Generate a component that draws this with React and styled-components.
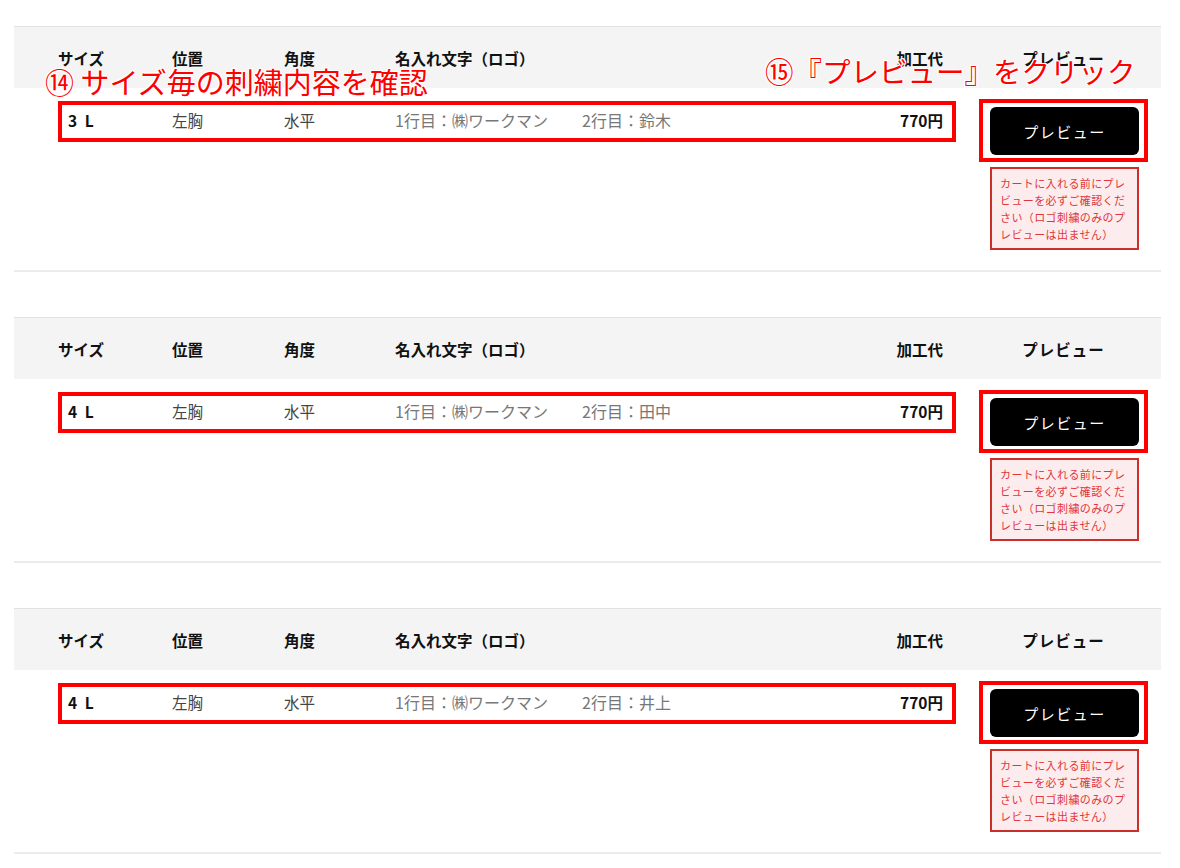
import React from 'react'
import styled, { createGlobalStyle } from 'styled-components'

const GlobalStyle = createGlobalStyle`
  * { box-sizing: border-box; }
  body {
    margin: 0;
    background: #fff;
    font-family: "Noto Sans CJK JP", "Noto Sans", sans-serif;
    color: #222;
  }
`

const Page = styled.div`
  position: relative;
  width: 1147px;
  margin-left: 14px;
  padding-top: 26px;
  display: flex;
  flex-direction: column;
  gap: 45px;
`

const Section = styled.section`
  border-top: 1px solid #e2e2e2;
  border-bottom: 2px solid #ebebeb;
`

const Head = styled.div`
  display: flex;
  align-items: center;
  height: 61px;
  padding-left: 44px;
  gap: 23px;
  background: #f4f4f4;
`

const Cols = styled.div`
  width: 898px;
  display: grid;
  grid-template-columns: 114px 112px 111px 1fr auto;
  align-items: center;
  padding-right: 13px;
`

const HeadCell = styled.div`
  font-size: 15.5px;
  font-weight: 700;
  color: #111;
  text-align: ${p => (p.right ? 'right' : 'left')};
`

const PreviewHead = styled.div`
  width: 169px;
  text-align: center;
  font-size: 15.5px;
  font-weight: 700;
  color: #111;
  letter-spacing: 1px;
`

const Body = styled.div`
  display: flex;
  align-items: flex-start;
  padding: 11px 0 20px 44px;
  gap: 23px;
`

const DataBox = styled(Cols)`
  height: 41px;
  margin-top: 2px;
  padding-bottom: 4px;
  outline: 4px solid #ff0000;
  outline-offset: -4px;
`

const Cell = styled.div`
  font-size: 15.5px;
  color: ${p => (p.bold ? '#111' : '#444')};
  font-weight: ${p => (p.bold ? 700 : 400)};
  padding-left: ${p => (p.inset ? '10px' : '0')};
  letter-spacing: ${p => (p.inset ? '2px' : '0')};
  text-align: ${p => (p.right ? 'right' : 'left')};
  white-space: nowrap;
`

const Lines = styled.div`
  display: flex;
  font-size: 16px;
  color: #777;
  white-space: nowrap;
`

const Line = styled.span`
  min-width: 187px;
`

const PreviewCol = styled.div`
  width: 169px;
  display: flex;
  flex-direction: column;
`

const ButtonFrame = styled.div`
  padding: 4px 5px 3px 7px;
  border: 4px solid #ff0000;
`

const PreviewButton = styled.button`
  display: block;
  width: 149px;
  height: 48px;
  border: none;
  border-radius: 6px;
  background: #000;
  color: #fff;
  font-family: inherit;
  font-size: 15px;
  letter-spacing: 1.5px;
  cursor: pointer;
`

const Note = styled.p`
  width: 149px;
  margin: 5px 0 0 11px;
  padding: 6px 8px 5px;
  border: 2px solid #c9302c;
  background: #fdeced;
  color: #e0363a;
  font-size: 11px;
  line-height: 17px;
  letter-spacing: 0.4px;
`

const Callout = styled.div`
  position: absolute;
  left: ${p => p.x}px;
  top: ${p => p.y}px;
  font-size: ${p => p.size || 29}px;
  line-height: 1;
  color: #ff0000;
  white-space: nowrap;
  text-shadow:
    1px 0 0 #fff, -1px 0 0 #fff, 0 1px 0 #fff, 0 -1px 0 #fff,
    1px 1px 0 #fff, -1px -1px 0 #fff, 1px -1px 0 #fff, -1px 1px 0 #fff;
`

const orders = [
  { size: '3 L', line2: '鈴木' },
  { size: '4 L', line2: '田中' },
  { size: '4 L', line2: '井上' },
]

const OrderSection = ({ size, line2 }) => (
  <Section>
    <Head>
      <Cols>
        <HeadCell>サイズ</HeadCell>
        <HeadCell>位置</HeadCell>
        <HeadCell>角度</HeadCell>
        <HeadCell>名入れ文字（ロゴ）</HeadCell>
        <HeadCell right>加工代</HeadCell>
      </Cols>
      <PreviewHead>プレビュー</PreviewHead>
    </Head>
    <Body>
      <DataBox>
        <Cell bold inset>{size}</Cell>
        <Cell>左胸</Cell>
        <Cell>水平</Cell>
        <Lines>
          <Line>1行目：㈱ワークマン</Line>
          <Line>2行目：{line2}</Line>
        </Lines>
        <Cell bold right>770円</Cell>
      </DataBox>
      <PreviewCol>
        <ButtonFrame>
          <PreviewButton>プレビュー</PreviewButton>
        </ButtonFrame>
        <Note>カートに入れる前にプレビューを必ずご確認ください（ロゴ刺繍のみのプレビューは出ません）</Note>
      </PreviewCol>
    </Body>
  </Section>
)

const App = () => (
  <>
    <GlobalStyle />
    <Page>
      {orders.map((o, i) => <OrderSection key={i} {...o} />)}
      <Callout x={31} y={67}>⑭ サイズ毎の刺繍内容を確認</Callout>
      <Callout x={751} y={57} size={28.5}>⑮『プレビュー』をクリック</Callout>
    </Page>
  </>
)

export default App
